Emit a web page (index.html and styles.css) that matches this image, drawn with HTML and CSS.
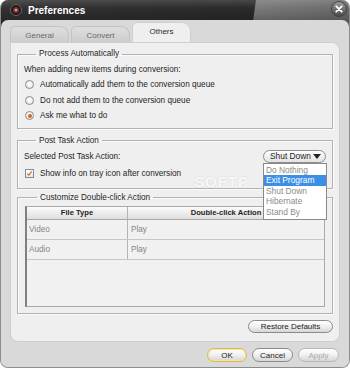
FILE: index.html
```html
<!DOCTYPE html>
<html>
<head>
<meta charset="utf-8">
<link rel="stylesheet" href="styles.css">
</head>
<body>
<div class="win">
  <div class="titlebar">
    <svg class="appicon" width="12" height="12" viewBox="0 0 12 12">
      <circle cx="6" cy="6" r="5.5" fill="#1a1a1a" stroke="#777" stroke-width="0.8"/>
      <circle cx="6" cy="6" r="3" fill="#8a2a2a"/>
      <circle cx="6" cy="6" r="1.3" fill="#d8a0a0"/>
    </svg>
    <span class="title">Preferences</span>
    <svg class="close" width="16" height="16" viewBox="0 0 16 16">
      <defs>
        <linearGradient id="cg" x1="0" y1="0" x2="0" y2="1">
          <stop offset="0" stop-color="#9a9a9a"/>
          <stop offset="1" stop-color="#4a4a4a"/>
        </linearGradient>
      </defs>
      <circle cx="8" cy="8" r="7.5" fill="url(#cg)" stroke="#3a3a3a" stroke-width="0.8"/>
      <path d="M5.3 5.3 L10.7 10.7 M10.7 5.3 L5.3 10.7" stroke="#fff" stroke-width="1.9" stroke-linecap="round"/>
    </svg>
  </div>
  <div class="body">
    <div class="tabs">
      <div class="tab">General</div>
      <div class="tab">Convert</div>
      <div class="tab active">Others</div>
    </div>
    <div class="panel">
      <fieldset class="grp g1">
        <legend>Process Automatically</legend>
        <div class="line first">When adding new items during conversion:</div>
        <div class="line opt"><span class="radio"></span>Automatically add them to the conversion queue</div>
        <div class="line opt"><span class="radio"></span>Do not add them to the conversion queue</div>
        <div class="line opt"><span class="radio on"></span>Ask me what to do</div>
      </fieldset>
      <fieldset class="grp g2">
        <legend>Post Task Action</legend>
        <div class="line sel">
          <span>Selected Post Task Action:</span>
          <div class="combo">
            <span>Shut Down</span>
            <svg width="8" height="5" viewBox="0 0 8 5"><path d="M0 0 H8 L4 5 Z" fill="#222"/></svg>
            <ul class="droplist">
              <li>Do Nothing</li>
              <li class="hl">Exit Program</li>
              <li>Shut Down</li>
              <li>Hibernate</li>
              <li>Stand By</li>
            </ul>
          </div>
        </div>
        <div class="line chk">
          <span class="check">
            <svg width="9" height="9" viewBox="0 0 9 9"><path d="M1.8 4.6 L3.7 6.7 L7.3 1.8" fill="none" stroke="#c8641e" stroke-width="1.4"/></svg>
          </span>Show info on tray icon after conversion
        </div>
        <span class="watermark">SOFTP</span>
      </fieldset>
      <fieldset class="grp g3">
        <legend>Customize Double-click Action</legend>
        <div class="listview">
          <div class="lrow head">
            <div class="c1">File Type</div>
            <div class="c2">Double-click Action</div>
          </div>
          <div class="lrow">
            <div class="c1">Video</div>
            <div class="c2">Play</div>
          </div>
          <div class="lrow">
            <div class="c1">Audio</div>
            <div class="c2">Play</div>
          </div>
        </div>
      </fieldset>
      <div class="restore-row">
        <button class="btn restore">Restore Defaults</button>
      </div>
    </div>
    <div class="footer">
      <button class="btn ok">OK</button>
      <button class="btn cancel">Cancel</button>
      <button class="btn apply" disabled>Apply</button>
    </div>
  </div>
</div>
</body>
</html>
```

FILE: styles.css
```css
* { box-sizing: border-box; }
html, body {
  margin: 0;
  padding: 0;
  background: #ffffff;
}
body {
  font-family: "Liberation Sans", Arial, sans-serif;
  font-size: 8.2px;
  color: #1e1e1e;
}
.win {
  width: 350px;
  height: 368px;
  border-radius: 8px;
  overflow: hidden;
  background: #d8d8d8;
  display: flex;
  flex-direction: column;
  position: relative;
  border: 1px solid #8c8c8c;
  border-top: none;
}
.titlebar {
  height: 28px;
  margin-bottom: -8px;
  padding: 0 0 8px 8px;
  display: flex;
  align-items: center;
  background:
    linear-gradient(180deg, rgba(255,255,255,0.14) 0, rgba(0,0,0,0) 8px, rgba(0,0,0,0.22) 22px),
    linear-gradient(98deg, #323232 0, #2a2a2a 252px, #7a7a7a 253px, #6a6a6a 100%);
}
.appicon { margin-left: 1px; }
.title {
  font-size: 10px;
  font-weight: bold;
  color: #ffffff;
  margin-left: 6px;
  margin-top: 1px;
}
.close {
  margin-left: auto;
  margin-right: 2px;
  margin-top: -2px;
}
.body {
  flex: 1;
  background: #d9d9d9;
  border-radius: 7px 7px 0 0;
  display: flex;
  flex-direction: column;
  padding: 0 9px 0 9px;
  position: relative;
}
.tabs {
  height: 22px;
  display: flex;
  align-items: flex-end;
  gap: 2px;
}
.tab {
  width: 59px;
  height: 16px;
  border-radius: 5px 9px 0 0;
  background: linear-gradient(180deg, #dedede, #cdcdcd);
  border: 1px solid #c2c2c2;
  border-bottom: none;
  color: #6a6a6a;
  font-size: 8px;
  display: flex;
  align-items: center;
  justify-content: center;
  padding-top: 1px;
}
.tab.active {
  height: 20px;
  background: #efefef;
  border-color: #cfcfcf;
  color: #2a2a2a;
  padding-top: 0;
  padding-bottom: 2px;
}
.panel {
  height: 300px;
  background: #efefef;
  border-radius: 0 8px 8px 8px;
  border: 1px solid #cfcfcf;
  padding: 5px 6px 6px 6px;
  display: flex;
  flex-direction: column;
}
.grp {
  margin: 0;
  padding: 0 6px;
  border: 1px solid #b2b2b2;
  box-shadow: inset 1px 1px 0 #fafafa, 1px 1px 0 #fafafa;
  position: relative;
  min-width: 0;
}
.grp legend {
  padding: 0 3px;
  margin-left: 12px;
  line-height: 12px;
  font-size: 8.2px;
  color: #1e1e1e;
}
.line {
  display: flex;
  align-items: center;
}
.g1 { padding-bottom: 4px; }
.g1 .first { height: 15px; margin-top: 2px; }
.g1 .opt { height: 15.5px; }
.radio {
  width: 9px;
  height: 9px;
  border-radius: 50%;
  border: 1px solid #8a8a8a;
  background: radial-gradient(circle at 50% 40%, #ffffff, #e4e4e4);
  margin: 0 6px 0 1px;
  position: relative;
  flex: none;
}
.radio.on::after {
  content: "";
  position: absolute;
  left: 1.5px;
  top: 1.5px;
  width: 4px;
  height: 4px;
  border-radius: 50%;
  background: #d8661c;
}
.g2 {
  margin-top: 6px;
  padding-bottom: 5px;
}
.g2 .sel {
  height: 17px;
  margin-top: 1px;
  justify-content: space-between;
}
.combo {
  width: 63px;
  height: 13px;
  border: 1px solid #8e8e8e;
  border-radius: 7px;
  background: linear-gradient(180deg, #ffffff, #e2e2e2);
  display: flex;
  align-items: center;
  justify-content: space-between;
  padding: 0 4px 0 6px;
  position: relative;
  font-size: 8.4px;
}
.droplist {
  position: absolute;
  left: -1px;
  top: 12px;
  width: 64px;
  margin: 0;
  padding: 1px 0 2px;
  list-style: none;
  background: #ffffff;
  border: 1px solid #8a8a8a;
  z-index: 5;
}
.droplist li {
  height: 10.6px;
  line-height: 10.6px;
  padding-left: 2px;
  color: #8a8a8a;
  font-size: 8.4px;
}
.droplist li.hl {
  background: #3b8fe6;
  color: #ffffff;
}
.g2 .chk { height: 18px; }
.check {
  width: 9px;
  height: 9px;
  border: 1px solid #8a8a8a;
  background: linear-gradient(180deg, #ffffff, #e6e6e6);
  margin: 0 6px 0 1px;
  display: flex;
  align-items: center;
  justify-content: center;
  flex: none;
}
.check svg { display: block; }
.watermark {
  position: absolute;
  left: 176px;
  top: 26px;
  font-size: 15px;
  font-weight: bold;
  letter-spacing: 1px;
  color: rgba(255,255,255,0.8);
  text-shadow: 0 0 2px rgba(0,0,0,0.12);
}
.g3 {
  margin-top: 3px;
  padding: 2px 7px 6px 7px;
}
.listview {
  height: 101px;
  background: #f1f1f1;
  border: 1px solid #a9a9a9;
  border-left: 2px solid #808080;
}
.lrow {
  display: flex;
  height: 20px;
  border-bottom: 1px solid #c6c6c6;
}
.lrow.head {
  height: 13px;
  background: linear-gradient(180deg, #fbfbfb, #dedede);
  border-bottom: 1px solid #a8a8a8;
  font-weight: bold;
  font-size: 7.6px;
}
.c1 {
  width: 101px;
  border-right: 1px solid #b4b4b4;
  display: flex;
  align-items: center;
  padding-left: 2px;
  color: #858585;
}
.c2 {
  flex: 1;
  display: flex;
  align-items: center;
  padding-left: 3px;
  color: #858585;
}
.lrow.head .c1, .lrow.head .c2 {
  justify-content: center;
  color: #1e1e1e;
  padding: 0;
}
.restore-row {
  display: flex;
  justify-content: flex-end;
  margin-top: 6px;
}
.btn {
  font-family: "Liberation Sans", Arial, sans-serif;
  font-size: 8px;
  color: #222;
  height: 14px;
  padding: 0;
  border: 1px solid #8a8a8a;
  border-radius: 7px;
  background: linear-gradient(180deg, #ffffff 0, #f2f2f2 45%, #d6d6d6 100%);
  display: flex;
  align-items: center;
  justify-content: center;
}
.restore { width: 85px; height: 13px; }
.footer {
  display: flex;
  justify-content: flex-end;
  gap: 5px;
  padding-top: 6px;
  padding-right: 1px;
}
.ok { width: 40px; border-color: #e0b84e; box-shadow: inset 0 0 0 1px #f6e3a8; }
.cancel { width: 41px; }
.apply { width: 41px; color: #a8a8a8; border-color: #b8b8b8; }
```
